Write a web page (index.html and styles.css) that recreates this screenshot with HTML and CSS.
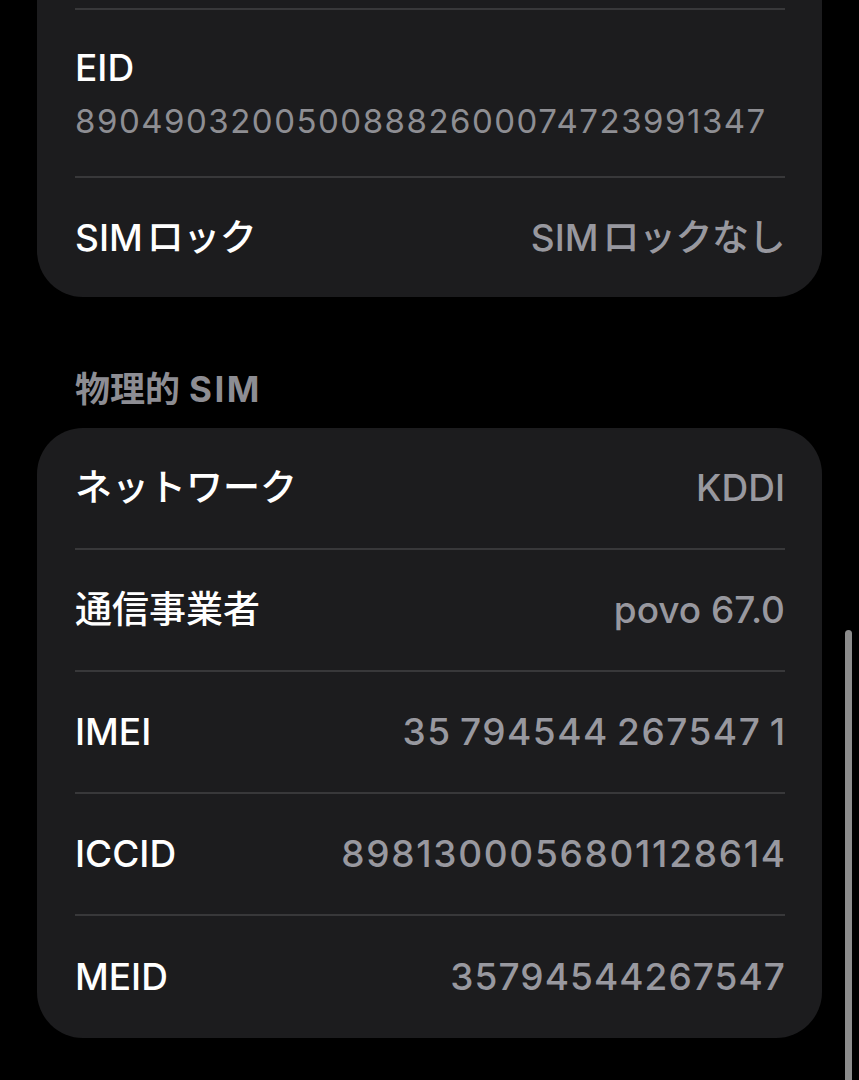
FILE: index.html
```html
<!DOCTYPE html>
<html lang="ja">
<head>
<meta charset="utf-8">
<title>SIM情報</title>
<link rel="stylesheet" href="styles.css">
</head>
<body>
<main class="screen">
  <section class="card card-top">
    <div class="row row-clip"></div>
    <div class="row row-stack">
      <div class="label">EID</div>
      <div class="sub">89049032005008882600074723991347</div>
    </div>
    <div class="row row-last-top">
      <div class="label">SIM<span class="jp-gap">ロック</span></div>
      <div class="value">SIM<span class="jp-gap">ロックなし</span></div>
    </div>
  </section>

  <h2 class="section-header">物理的<span class="latin-gap">SIM</span></h2>

  <section class="card card-sim">
    <div class="row row-first">
      <div class="label">ネットワーク</div>
      <div class="value">KDDI</div>
    </div>
    <div class="row">
      <div class="label">通信事業者</div>
      <div class="value">povo 67.0</div>
    </div>
    <div class="row">
      <div class="label">IMEI</div>
      <div class="value num num-spaced">35 794544 267547 1</div>
    </div>
    <div class="row">
      <div class="label">ICCID</div>
      <div class="value num num-wide">8981300056801128614</div>
    </div>
    <div class="row row-end">
      <div class="label">MEID</div>
      <div class="value num num-tight">35794544267547</div>
    </div>
  </section>
</main>
<div class="scroll-indicator"></div>
</body>
</html>
```

FILE: styles.css
```css
html, body {
  margin: 0;
  padding: 0;
  background: #000;
  height: 100%;
  overflow: hidden;
}

body {
  font-family: Inter, "Noto Sans CJK JP", sans-serif;
  color: #fff;
  -webkit-font-smoothing: antialiased;
}

.screen {
  padding: 0 37px;
}

.card {
  background: #1c1c1e;
  border-radius: 46px;
}

.card-top {
  margin-top: -60px;
}

.row {
  display: flex;
  align-items: center;
  justify-content: space-between;
  margin: 0 37px 0 38px;
  height: 122px;
  box-sizing: border-box;
  border-top: 2px solid #38383a;
}

.row-clip {
  height: 68px;
  border-top: none;
}

.row-stack {
  height: 168px;
  flex-direction: column;
  align-items: flex-start;
  justify-content: flex-start;
  padding-top: 36px;
  gap: 13px;
}

.row-last-top {
  height: 121px;
}

.row-first {
  height: 120px;
  border-top: none;
}

.row-end {
  height: 124px;
}

.label {
  font-size: 37px;
  font-weight: 500;
  line-height: 44px;
  color: #fff;
  white-space: nowrap;
}

.value {
  font-size: 37px;
  font-weight: 500;
  line-height: 44px;
  color: #98989f;
  white-space: nowrap;
}

.num {
  letter-spacing: 1.5px;
  margin-right: -1.5px;
}

.num-spaced {
  word-spacing: -3px;
}

.num-wide {
  letter-spacing: 1.7px;
  margin-right: -1.7px;
}

.num-tight {
  letter-spacing: 1.05px;
  margin-right: -1.05px;
}

.jp-gap {
  margin-left: 4px;
  letter-spacing: -0.5px;
}

.sub {
  font-size: 33px;
  font-weight: 400;
  line-height: 36px;
  color: #8e8e93;
  white-space: nowrap;
  letter-spacing: 1.5px;
}

.section-header {
  margin: 0;
  padding: 72px 38px 19px;
  font-size: 35px;
  font-weight: 700;
  line-height: 40px;
  color: #8d8d93;
}

.latin-gap {
  margin-left: 9px;
  letter-spacing: 2.5px;
}

.scroll-indicator {
  position: absolute;
  left: 845px;
  top: 630px;
  width: 7px;
  height: 480px;
  border-radius: 3.5px;
  background: #8c8c8c;
}
```
